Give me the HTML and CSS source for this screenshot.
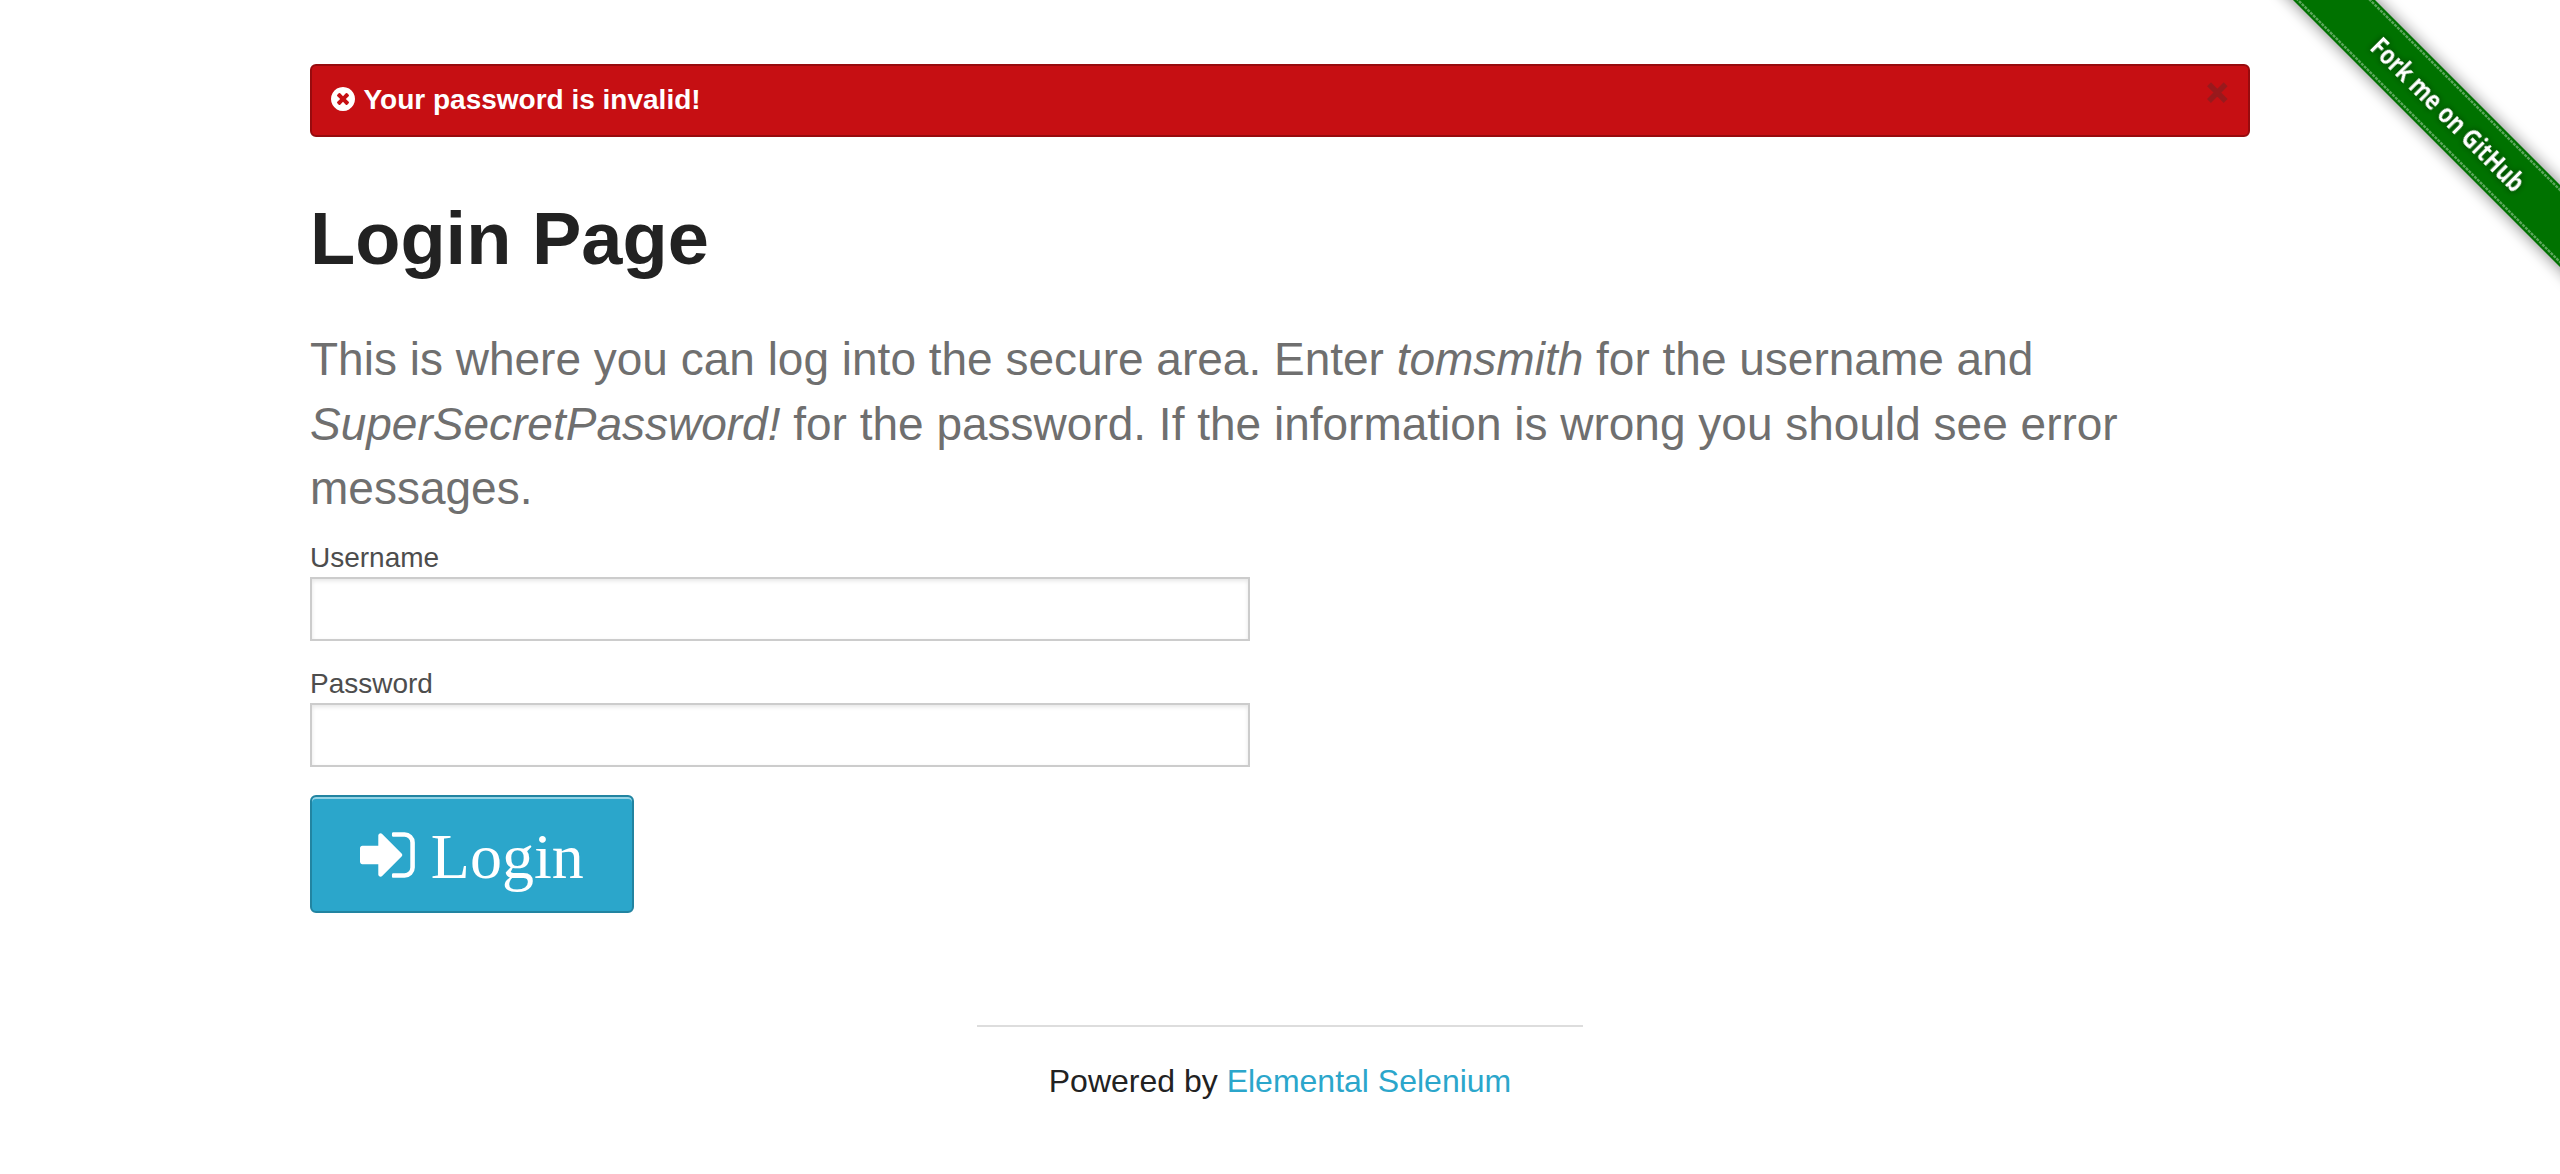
FILE: index.html
```html
<!DOCTYPE html>
<html lang="en">
<head>
<meta charset="utf-8">
<title>The Internet</title>
<link rel="stylesheet" href="styles.css">
</head>
<body>
<a class="ribbon" href="#" aria-label="Fork me on GitHub">
  <svg width="298" height="298" viewBox="0 0 298 298">
    <g transform="translate(72 0) rotate(45)">
      <rect class="ribbon-shadow" x="-60" y="-29" width="460" height="58"/>
      <rect class="ribbon-band" x="-60" y="-29" width="460" height="58"/>
      <path class="ribbon-stitch" d="M-60 -25.5H400M-60 25.5H400"/>
      <text class="ribbon-text" x="59" y="9.5" textLength="205" lengthAdjust="spacingAndGlyphs">Fork me on GitHub</text>
    </g>
  </svg>
</a>
<div class="page">
  <div class="flash">
    <svg class="flash-icon" viewBox="128 0 1536 1792"><path d="M1277 1122q0-26-19-45l-181-181 181-181q19-19 19-45 0-27-19-46l-90-90q-19-19-46-19-26 0-45 19l-181 181-181-181q-19-19-45-19-27 0-46 19l-90 90q-19 19-19 46 0 26 19 45l181 181-181 181q-19 19-19 45 0 27 19 46l90 90q19 19 46 19 26 0 45-19l181-181 181 181q19 19 45 19 27 0 46-19l90-90q19-19 19-46zm387-226q0 209-103 385.5t-279.5 279.5-385.5 103-385.5-103-279.5-279.5-103-385.5 103-385.5 279.5-279.5 385.5-103 385.5 103 279.5 279.5 103 385.5z"/></svg>
    <span class="flash-text">Your password is invalid!</span>
    <a class="close" href="#">×</a>
  </div>
  <h2 class="title">Login Page</h2>
  <h4 class="subheader">This is where you can log into the secure area. Enter <em>tomsmith</em> for the username and <em>SuperSecretPassword!</em> for the password. If the information is wrong you should see error messages.</h4>
  <form class="login">
    <label class="label" for="username">Username</label>
    <input class="field" type="text" id="username">
    <label class="label" for="password">Password</label>
    <input class="field" type="password" id="password">
    <button class="button" type="button">
      <svg class="button-icon" viewBox="0 0 1536 1792"><path d="M1184 896q0 26-19 45l-544 544q-19 19-45 19t-45-19-19-45v-288h-448q-26 0-45-19t-19-45v-384q0-26 19-45t45-19h448v-288q0-26 19-45t45-19 45 19l544 544q19 19 19 45zm352-352v704q0 119-84.5 203.5t-203.5 84.5h-320q-13 0-22.5-9.5t-9.5-22.5q0-4-1-20t-.5-26.5 3-23.5 10-19.5 20.5-6.5h320q66 0 113-47t47-113v-704q0-66-47-113t-113-47h-312l-11.5-1-11.5-3-8-5.5-7-9-2-13.5q0-4-1-20t-.5-26.5 3-23.5 10-19.5 20.5-6.5h320q119 0 203.5 84.5t84.5 203.5z"/></svg>
      <span class="button-text">Login</span>
    </button>
  </form>
  <footer class="footer">
    <hr class="rule">
    <div class="powered">Powered by <a class="link" href="#">Elemental Selenium</a></div>
  </footer>
</div>
</body>
</html>
```
FILE: styles.css
```css
* { box-sizing: border-box; }

body {
  margin: 0;
  background: #fff;
  color: #222;
  font-family: "Liberation Sans", Arial, sans-serif;
  font-size: 32px;
  overflow: hidden;
}

.page {
  width: 1940px;
  margin: 0 auto;
  padding-top: 64px;
}

.flash {
  display: flex;
  align-items: flex-start;
  height: 73px;
  padding: 18px 20px 0 19px;
  border: 2px solid #970b0e;
  border-radius: 6px;
  background: #c60f13;
  color: #fff;
  font-size: 28px;
  font-weight: bold;
  line-height: 32px;
}

.flash-icon {
  width: 24px;
  height: 28px;
  margin: 1px 8.5px 0 0;
  fill: #fff;
}

.close {
  margin: -9px 0 0 auto;
  color: #333;
  font-size: 37px;
  line-height: 36px;
  opacity: .3;
  text-decoration: none;
  -webkit-text-stroke: 1.5px #333;
}

.title {
  margin: 50px 0 0;
  font-size: 74px;
  line-height: 104px;
}

.subheader {
  margin: 36.2px 0 0;
  color: #6f6f6f;
  font-size: 46px;
  font-weight: normal;
  line-height: 64.4px;
}

.login {
  display: flex;
  flex-direction: column;
  align-items: flex-start;
  width: 940px;
  margin-top: 18.6px;
}

.label {
  color: #4d4d4d;
  font-size: 28px;
  line-height: 38px;
}

.field {
  width: 100%;
  height: 64px;
  margin: 0 0 24px;
  padding: 16px;
  border: 2px solid #ccc;
  border-radius: 0;
  background: #fff;
  box-shadow: inset 0 2px 4px rgba(0, 0, 0, .1);
  font-size: 28px;
}

.button {
  display: flex;
  align-items: center;
  gap: 16px;
  width: 324px;
  height: 118px;
  margin: 4px 0 0;
  padding: 2px 0 0 48px;
  border: 2px solid #2284a1;
  border-radius: 6px;
  background: #2ba6cb;
  box-shadow: inset 0 2px 0 rgba(255, 255, 255, .5);
  color: #fff;
  font-family: "Liberation Serif", "Times New Roman", serif;
  font-size: 64px;
  line-height: 74px;
}

.button-icon {
  width: 54.86px;
  height: 64px;
  fill: #fff;
}

.button-text { padding-top: 4px; }

.footer {
  width: 606.67px;
  margin: 112px auto 0;
  text-align: center;
}

.rule {
  height: 2px;
  margin: 0;
  border: 0;
  background: #ddd;
}

.powered {
  margin-top: 30px;
  line-height: 48px;
}

.link {
  color: #2ba6cb;
  text-decoration: none;
}

.ribbon {
  position: absolute;
  top: 0;
  right: 0;
  width: 298px;
  height: 298px;
}

.ribbon-band { fill: #007200; }

.ribbon-shadow {
  fill: #000;
  opacity: .5;
  filter: blur(8px);
}

.ribbon-stitch {
  fill: none;
  stroke: #5ca65c;
  stroke-width: 2.4;
  stroke-dasharray: 3 1;
}

.ribbon-text {
  fill: #fff;
  font-family: "Noto Sans", sans-serif;
  font-size: 26px;
  font-weight: 700;
  filter: drop-shadow(0 0 3px rgba(0, 0, 0, .5));
}
```
